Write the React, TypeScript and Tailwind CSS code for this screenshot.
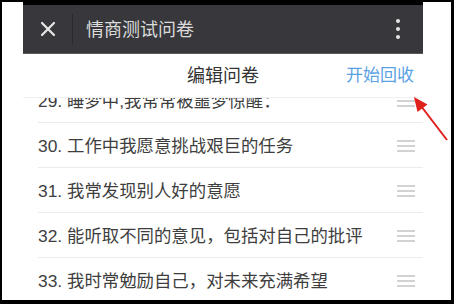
import React from "react";

const rows = [
  "29. 睡梦中,我常常被噩梦惊醒：",
  "30. 工作中我愿意挑战艰巨的任务",
  "31. 我常发现别人好的意愿",
  "32. 能听取不同的意见，包括对自己的批评",
  "33. 我时常勉励自己，对未来充满希望",
];

const font = { fontFamily: '"Liberation Sans", "Noto Sans CJK SC", sans-serif' };

function Handle() {
  return (
    <div className="flex flex-col gap-[3px] w-[18px]">
      <div className="h-[2px] bg-[#d2d2d2]" />
      <div className="h-[2px] bg-[#d2d2d2]" />
      <div className="h-[2px] bg-[#d2d2d2]" />
    </div>
  );
}

export default function App() {
  return (
    <div
      className="relative w-[454px] h-[304px] bg-black pt-[2px] pl-[2px] pr-[3px] pb-[4px] overflow-hidden"
      style={font}
    >
      <div className="flex h-full bg-white">
        <div className="w-[21px] shrink-0" />
        <div className="w-[400px] shrink-0 flex flex-col h-full">
          <div className="h-[3px] bg-black shrink-0" />
          <div className="h-[48px] shrink-0 bg-[#38383c] flex items-center">
            <div className="w-[49px] flex items-center justify-center">
              <svg width="16" height="16" viewBox="0 0 16 16">
                <path d="M2 2 L14 14 M14 2 L2 14" stroke="#e8e8e8" strokeWidth="2.2" strokeLinecap="round" />
              </svg>
            </div>
            <div className="w-px h-[30px] bg-[#2a2a2d]" />
            <div className="ml-[13px] text-[18px] text-[#dcdcdc] leading-none pt-[1px]">情商测试问卷</div>
            <div className="ml-auto mr-[23px] flex flex-col gap-[4px]">
              <div className="w-[4px] h-[4px] rounded-full bg-[#e6e6e6]" />
              <div className="w-[4px] h-[4px] rounded-full bg-[#e6e6e6]" />
              <div className="w-[4px] h-[4px] rounded-full bg-[#e6e6e6]" />
            </div>
          </div>
          <div className="h-px bg-[#5a5a5e] shrink-0" />
          <div className="h-[44px] shrink-0 grid grid-cols-[1fr_auto_1fr] items-center border-b border-[#f0f0f0]">
            <div />
            <div className="text-[18px] text-[#333333] pt-[1px]">编辑问卷</div>
            <div className="justify-self-end pr-[9px] text-[17px] text-[#5aa2e4] pt-[1px]">开始回收</div>
          </div>
          <div className="flex-1 overflow-hidden">
            <div className="mt-[-20px]">
              {rows.map((r) => (
                <div key={r} className="ml-[15px] border-b border-[#ebebeb] h-[45px] flex items-center pr-[8px]">
                  <div className="text-[17.4px] text-[#3e3e3e] pt-[3px] whitespace-nowrap">{r}</div>
                  <div className="ml-auto pt-[1px]">
                    <Handle />
                  </div>
                </div>
              ))}
            </div>
          </div>
        </div>
        <div className="flex-1" />
      </div>
      <svg className="absolute left-0 top-0 pointer-events-none" width="454" height="304" viewBox="0 0 454 304">
        <line x1="447" y1="140" x2="421" y2="106" stroke="#e0201c" strokeWidth="2" />
        <polygon points="414,97 427.5,104.4 417.5,112" fill="#e0201c" />
      </svg>
    </div>
  );
}
